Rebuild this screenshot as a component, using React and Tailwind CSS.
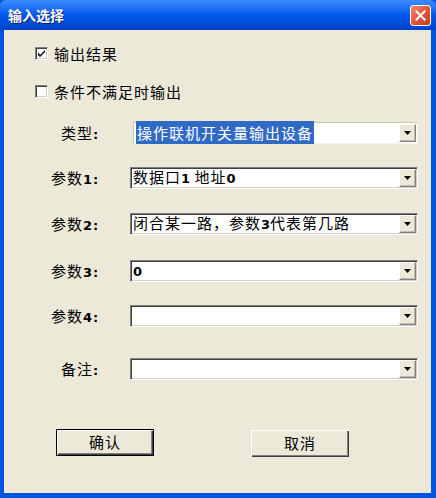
const font = { fontFamily: '"SimSun", "Noto Sans CJK SC", "DejaVu Sans", sans-serif' };
const latin = { fontFamily: 'Tahoma, "DejaVu Sans", sans-serif' };

// ascii digits in this dialog render bold, CJK stays regular
const Txt = ({ s }) =>
  s.split(/(\d+)/).map((part, i) =>
    /^\d+$/.test(part) ? (
      <span key={i} className="font-bold tracking-normal text-[13px]" style={latin}>{part}</span>
    ) : (
      <span key={i}>{part}</span>
    )
  );

const CheckBox = ({ checked, label }) => (
  <div className="flex items-center h-[13px] pl-[31px]">
    <div className="w-[13px] h-[13px] bg-white border border-t-[#808080] border-l-[#808080] border-b-white border-r-white shadow-[inset_1px_1px_0_#404040,inset_-1px_-1px_0_#d4d0c8] flex items-center justify-center">
      {checked && (
        <svg width="7" height="7" viewBox="0 0 7 7">
          <path d="M0 2v3l2 2 5-5V0L2 5z" fill="#000" />
        </svg>
      )}
    </div>
    <span className="ml-[6px] text-[15px] tracking-[1px] leading-none text-black whitespace-nowrap">{label}</span>
  </div>
);

const Combo = ({ value, selected, light }) => (
  <div
    className={
      'flex-1 h-[22px] flex items-center bg-white border ' +
      (light
        ? 'border-[#c9c6b8] border-b-[#f4f3ee] border-r-[#f4f3ee]'
        : 'border-t-[#808080] border-l-[#808080] border-b-white border-r-white shadow-[inset_1px_1px_0_#404040,inset_-1px_-1px_0_#d4d0c8]')
    }
  >
    <div className="flex-1 min-w-0 pl-[2px] text-[15px] tracking-[1px] leading-[20px] text-black whitespace-nowrap">
      {selected ? (
        <span className="bg-[#316ac5] text-white px-[1px] py-[1px]"><Txt s={value} /></span>
      ) : (
        <Txt s={value} />
      )}
    </div>
    <div className="w-[17px] h-[18px] mr-[1px] bg-[#ece9d8] border border-t-white border-l-white border-b-[#808080] border-r-[#808080] shadow-[inset_-1px_-1px_0_#c0bdb0] flex items-center justify-center">
      <svg width="7" height="4" viewBox="0 0 7 4">
        <path d="M0 0h7L3.5 4z" fill="#000" />
      </svg>
    </div>
  </div>
);

const Row = ({ mt, labelPad, label, num, comboPad = 0, children }) => (
  <div className="flex items-center pr-[13px]" style={{ marginTop: mt }}>
    <div className="w-[126px] text-[15px] tracking-[1px] leading-none text-black whitespace-nowrap" style={{ paddingLeft: labelPad }}>
      {label}
      {num && <span className="font-bold text-[13px]" style={latin}>{num}</span>}
      <span className="font-bold text-[13px]" style={latin}>:</span>
    </div>
    <div className="flex-1 flex" style={{ paddingLeft: comboPad }}>{children}</div>
  </div>
);

const Button = ({ label, primary }) => (
  <div
    className={
      'h-[27px] w-[98px] flex items-center justify-center bg-[#ece9d8] text-[15px] tracking-[1px] text-black ' +
      (primary
        ? 'border border-black shadow-[inset_1px_1px_0_#fff,inset_-1px_-1px_0_#404040,inset_-2px_-2px_0_#808080]'
        : 'shadow-[inset_1px_1px_0_#fff,inset_-1px_-1px_0_#404040,inset_-2px_-2px_0_#808080]')
    }
  >
    {label}
  </div>
);

export default function App() {
  return (
    <div className="w-[436px] h-[498px] flex flex-col bg-[#0054e3]" style={font}>
      {/* title bar */}
      <div className="h-[30px] flex items-center px-[8px] bg-gradient-to-b from-[#3d8bff] via-[#0058ee] to-[#0042c8] rounded-t-[6px]">
        <span className="flex-1 text-white font-bold text-[14px] leading-none [text-shadow:1px_1px_0_#0a1e6e]">输入选择</span>
        <div className="w-[21px] h-[21px] rounded-[3px] border border-white bg-gradient-to-br from-[#f08a6c] via-[#e0553a] to-[#c23d1e] flex items-center justify-center mr-[-3px]">
          <svg width="11" height="11" viewBox="0 0 11 11">
            <path d="M1.5 1.5l8 8M9.5 1.5l-8 8" stroke="#fff" strokeWidth="2" strokeLinecap="square" />
          </svg>
        </div>
      </div>

      {/* body */}
      <div className="flex-1 flex flex-col bg-[#ece9d8] ml-[4px] mr-[5px] mb-[5px]">
        <div className="mt-[17px]">
          <CheckBox checked label="输出结果" />
        </div>
        <div className="mt-[25px]">
          <CheckBox label="条件不满足时输出" />
        </div>

        <Row mt={24} labelPad={57} label="类型" comboPad={3}>
          <Combo value="操作联机开关量输出设备" selected light />
        </Row>
        <Row mt={23} labelPad={47} label="参数" num="1">
          <Combo value="数据口1 地址0" />
        </Row>
        <Row mt={24} labelPad={47} label="参数" num="2">
          <Combo value="闭合某一路，参数3代表第几路" />
        </Row>
        <Row mt={25} labelPad={47} label="参数" num="3">
          <Combo value="0" />
        </Row>
        <Row mt={23} labelPad={47} label="参数" num="4">
          <Combo value="" />
        </Row>
        <Row mt={31} labelPad={57} label="备注">
          <Combo value="" />
        </Row>

        <div className="flex mt-[49px] pl-[52px]">
          <Button label="确认" primary />
          <div className="ml-[97px] mt-[1px]">
            <Button label="取消" />
          </div>
        </div>
      </div>
    </div>
  );
}
